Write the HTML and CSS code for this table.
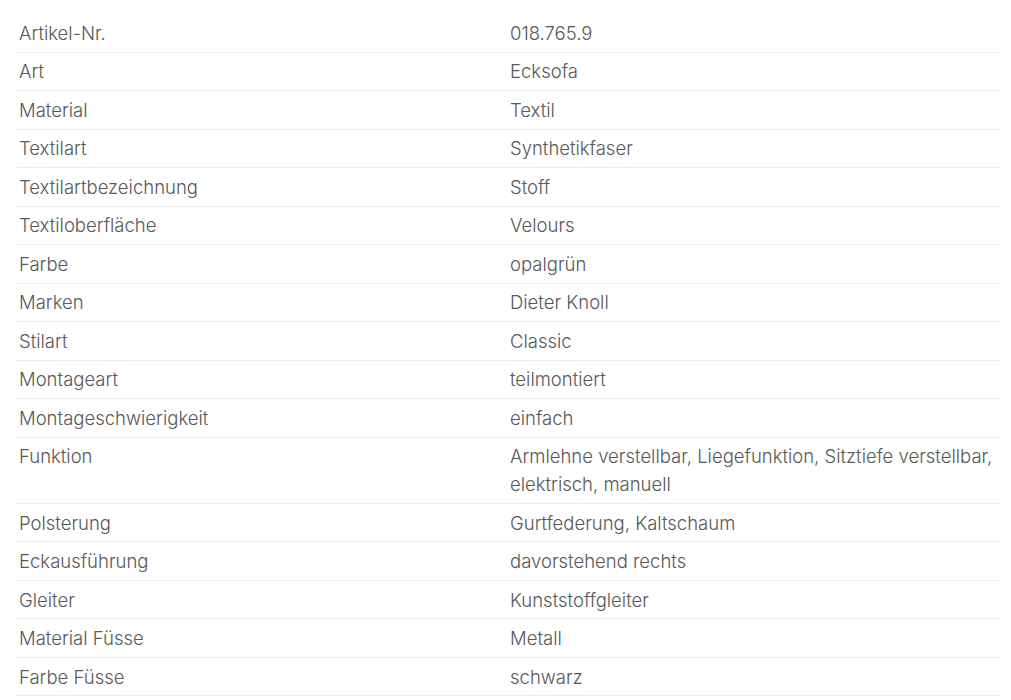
FILE: index.html
```html
<!DOCTYPE html>
<html lang="de">
<head>
<meta charset="utf-8">
<title>Produktdetails</title>
<link rel="stylesheet" href="styles.css">
</head>
<body>
<div class="specs">
  <div class="row"><div class="label">Artikel-Nr.</div><div class="value">018.765.9</div></div>
  <div class="row"><div class="label">Art</div><div class="value">Ecksofa</div></div>
  <div class="row"><div class="label">Material</div><div class="value">Textil</div></div>
  <div class="row"><div class="label">Textilart</div><div class="value">Synthetikfaser</div></div>
  <div class="row"><div class="label">Textilartbezeichnung</div><div class="value">Stoff</div></div>
  <div class="row"><div class="label">Textiloberfläche</div><div class="value">Velours</div></div>
  <div class="row"><div class="label">Farbe</div><div class="value">opalgrün</div></div>
  <div class="row"><div class="label">Marken</div><div class="value">Dieter Knoll</div></div>
  <div class="row"><div class="label">Stilart</div><div class="value">Classic</div></div>
  <div class="row"><div class="label">Montageart</div><div class="value">teilmontiert</div></div>
  <div class="row"><div class="label">Montageschwierigkeit</div><div class="value">einfach</div></div>
  <div class="row"><div class="label">Funktion</div><div class="value">Armlehne verstellbar, Liegefunktion, Sitztiefe verstellbar, elektrisch, manuell</div></div>
  <div class="row"><div class="label">Polsterung</div><div class="value">Gurtfederung, Kaltschaum</div></div>
  <div class="row"><div class="label">Eckausführung</div><div class="value">davorstehend rechts</div></div>
  <div class="row"><div class="label">Gleiter</div><div class="value">Kunststoffgleiter</div></div>
  <div class="row"><div class="label">Material Füsse</div><div class="value">Metall</div></div>
  <div class="row"><div class="label">Farbe Füsse</div><div class="value">schwarz</div></div>
</div>
</body>
</html>
```
FILE: styles.css
```css
html, body {
  margin: 0;
  background: #ffffff;
}

body {
  font-family: Inter, "Noto Sans", sans-serif;
  font-weight: 300;
  font-size: 18.5px;
  color: #585858;
  font-variant-ligatures: none;
}

.specs {
  width: 984px;
  margin: 0 0 0 17px;
  padding-top: 14px;
}

.row {
  display: grid;
  grid-template-columns: 491px 1fr;
  border-bottom: 1px solid #ececec;
}

.label,
.value {
  padding: 5.6px 2px 4px 2px;
  line-height: 27.9px;
}
```
